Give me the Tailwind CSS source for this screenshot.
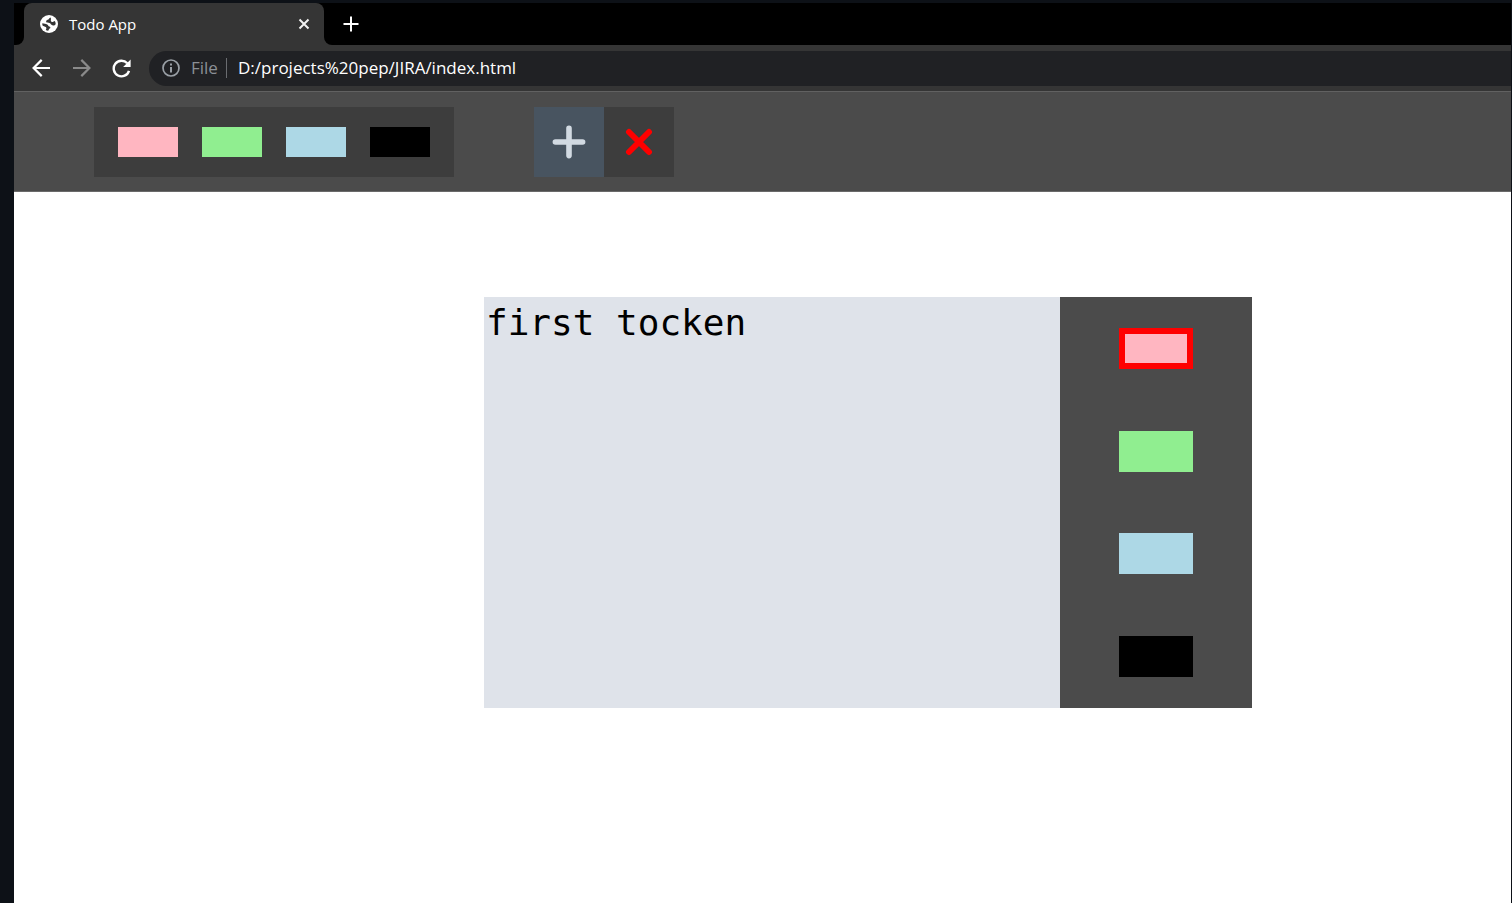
<!DOCTYPE html>
<html lang="en">
<head>
<meta charset="utf-8">
<meta name="viewport" content="width=device-width, initial-scale=1">
<title>Todo App</title>
<script src="https://cdn.jsdelivr.net/npm/@tailwindcss/browser@4"></script>
</head>
<body class="min-h-screen bg-[#0d1117] pt-[3px] pl-[14px] pr-px flex flex-col font-['Open_Sans','Noto_Sans',sans-serif]">

  <!-- Tab strip -->
  <header class="bg-black flex items-stretch h-[42px]">
    <div class="w-[10px] bg-[#353535]"><div class="h-full rounded-br-lg bg-black"></div></div>
    <div class="w-[300px] rounded-t-lg bg-[#353535] flex items-center pl-4 pr-[14px]">
      <svg class="size-[18px] shrink-0" viewBox="0 0 18 18" aria-hidden="true">
        <circle cx="9" cy="9" r="9" fill="#fff"/>
        <path d="M10.6 2.4C8.8 2.9 9.2 4.3 7.6 4.8C6.2 5.2 5.6 6.6 6.6 7.4C7.6 8.1 9.6 7.3 10.4 8.6C11 9.8 12.4 10.9 14 10.4C14.8 10.1 15.4 9.6 15.7 8.9C15.6 7.8 15.3 6.9 14.8 6.1C13.6 7 12.2 7.2 11.2 6.4C10.2 5.4 11.6 4.2 10.6 2.4Z" fill="#353535"/>
        <path d="M2.3 8.2C4 8.7 5.8 8.6 7.2 9.4C8.4 10.2 8.2 11 9.4 11.4C10.8 11.9 10.6 13.2 9.6 13.6C8.8 14 8.9 15 8.2 15.8C7.2 15.7 6.4 15.3 5.8 14.9C6.4 13.8 6.8 12.8 5.8 12C4.8 11.3 3.2 11.4 2.4 10.2Z" fill="#353535"/>
      </svg>
      <h1 class="ml-[11px] grow text-[15px] leading-5 text-white">Todo App</h1>
      <button type="button" aria-label="Close tab" class="flex">
        <svg class="size-3" viewBox="0 0 12 12" fill="none" stroke="#f1f1f1" stroke-width="2"><path d="M1.5 1.5 10.5 10.5M10.5 1.5 1.5 10.5"/></svg>
      </button>
    </div>
    <div class="w-[10px] bg-[#353535]"><div class="h-full rounded-bl-lg bg-black"></div></div>
    <button type="button" aria-label="New tab" class="flex items-center ml-[9px]">
      <svg class="size-4" viewBox="0 0 16 16" fill="none" stroke="#fff" stroke-width="2"><path d="M8 .5V15.5M.5 8H15.5"/></svg>
    </button>
  </header>

  <!-- Address bar -->
  <nav class="h-[47px] bg-[#353535] border-b border-[#616161] flex items-center pl-[18px]">
    <button type="button" aria-label="Back" class="flex">
      <svg class="size-[18px]" viewBox="0 0 18 18" fill="none" stroke="#fff" stroke-width="2.2"><path d="M18 9H1.8M9.7.9 1.6 9l8.1 8.1"/></svg>
    </button>
    <button type="button" aria-label="Forward" class="flex ml-[23px]">
      <svg class="size-[18px]" viewBox="0 0 18 18" fill="none" stroke="#8a8a8a" stroke-width="2.2"><path d="M0 9H16.2M8.3.9 16.4 9l-8.1 8.1"/></svg>
    </button>
    <button type="button" aria-label="Reload" class="flex ml-[21px]">
      <svg class="size-[19px]" viewBox="0 0 19 19" fill="none" stroke="#fff" stroke-width="2.4"><path d="M17 11.8A7.8 7.8 0 1 1 15.3 4.3"/><path d="M18.6.5V8H11.1Z" fill="#fff" stroke="none"/></svg>
    </button>
    <div class="ml-[18px] h-[35px] grow rounded-l-full bg-[#202124] flex items-center pl-[13px] text-[17px] leading-6">
      <svg class="size-[18px] shrink-0" viewBox="0 0 18 18" fill="none" stroke="#9aa0a6" aria-hidden="true"><circle cx="9" cy="9" r="8" stroke-width="1.7"/><path d="M9 8V13.4M9 4.6V6.6" stroke-width="2"/></svg>
      <span class="ml-[11px] w-[35px] text-[#8b9096]">File</span>
      <span class="h-5 w-px bg-[#6a6c70]"></span>
      <input type="text" aria-label="Address" value="D:/projects%20pep/JIRA/index.html" class="ml-[11px] grow min-w-0 bg-transparent text-white outline-none">
    </div>
  </nav>

  <!-- App toolbar -->
  <div class="h-[100px] bg-[#4b4b4b] border-b border-[#6a6a6a] flex items-center gap-20 px-20">
    <div class="w-[360px] h-[70px] bg-[#3d3d3d] flex items-center justify-evenly">
      <button type="button" aria-label="Filter pink" class="w-[60px] h-[30px] bg-[#ffb6c1]"></button>
      <button type="button" aria-label="Filter green" class="w-[60px] h-[30px] bg-[#90ee90]"></button>
      <button type="button" aria-label="Filter blue" class="w-[60px] h-[30px] bg-[#add8e6]"></button>
      <button type="button" aria-label="Filter black" class="w-[60px] h-[30px] bg-black"></button>
    </div>
    <div class="flex">
      <button type="button" aria-label="Add ticket" class="size-[70px] bg-[#485460] flex items-center justify-center">
        <svg class="size-[34px]" viewBox="0 0 34 34" fill="none" stroke="#d2dae2" stroke-width="5.6" stroke-linecap="round"><path d="M17 3.4V30.6M3.4 17H30.6"/></svg>
      </button>
      <button type="button" aria-label="Remove ticket" class="size-[70px] bg-[#3d3d3d] flex items-center justify-center">
        <svg class="size-7" viewBox="0 0 28 28" fill="none" stroke="#f00" stroke-width="6" stroke-linecap="round"><path d="M4 4 24 24M24 4 4 24"/></svg>
      </button>
    </div>
  </div>

  <!-- Board with the new-ticket dialog -->
  <main class="grow bg-white pt-[105px] pl-[470px]">
    <div class="w-[768px] h-[411px] flex">
      <textarea aria-label="Ticket text" spellcheck="false" class="w-3/4 resize-none bg-[#dfe3ea] px-[2px] pt-[2px] font-['DejaVu_Sans_Mono',monospace] text-[36px] leading-[47px] text-black outline-none">first tocken</textarea>
      <div class="w-1/4 bg-[#4b4b4b] flex flex-col items-center justify-around">
        <button type="button" aria-label="Pink" aria-pressed="true" class="w-[74px] h-[41px] bg-[#ffb6c1] border-6 border-[#f00]"></button>
        <button type="button" aria-label="Green" class="w-[74px] h-[41px] bg-[#90ee90]"></button>
        <button type="button" aria-label="Blue" class="w-[74px] h-[41px] bg-[#add8e6]"></button>
        <button type="button" aria-label="Black" class="w-[74px] h-[41px] bg-black"></button>
      </div>
    </div>
  </main>
</body>
</html>
